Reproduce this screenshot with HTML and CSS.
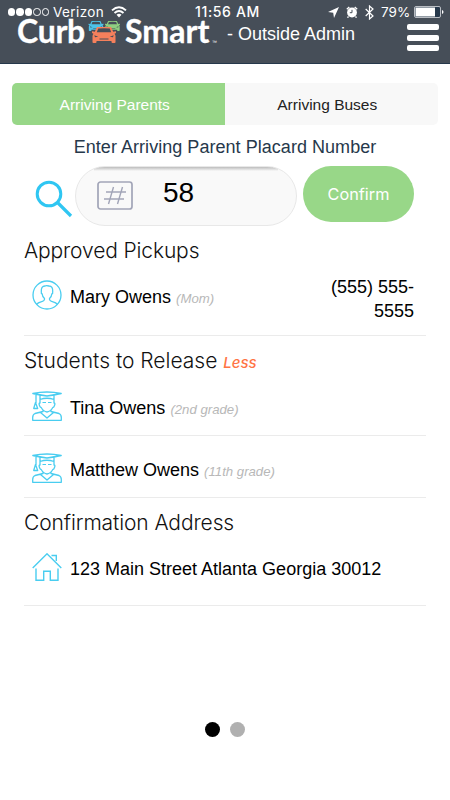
FILE: index.html
```html
<!DOCTYPE html>
<html lang="en">
<head>
<meta charset="utf-8">
<title>Curb Smart</title>
<link rel="stylesheet" href="styles.css">
</head>
<body>
<svg class="defs" width="0" height="0">
  <symbol id="grad" viewBox="0 0 30 30">
    <g fill="none" stroke="#49cdf0" stroke-width="1.3" stroke-linejoin="round">
      <path d="M.8 2.500Q15-.5 29.200 2.500Q22 4 15 5Q8 4 .8 2.500ZM8 4v4.500Q15 6 22 8.500V4M4 3.500v8.500M3.500 11.500l-1.800 6h4ZM8 8.500v3.500Q6.500 12 7.500 14.500Q8 16.500 9.200 16.500Q11.500 20.500 15 21Q18.500 20.500 20.800 16.500Q22 16.500 22.500 14.500Q23.500 12 22 12V8.500M11 19v1.500L3 22.500Q.7 23.500.7 26.500v2.800h28.600V26.500Q29.300 23.500 27 22.500L19 20.500V19M8.500 21.500L15 27L21.500 21.500"/>
      <path d="M10.500 11.500h3.500M16 11.500h3.500" stroke-width="1.200"/>
    </g>
  </symbol>
  <symbol id="car" viewBox="0 0 24 16">
    <path fill="currentColor" d="M5 0Q12-.8 19 0L21.200 4.800L24 4.300V6L22.500 6.800Q23.500 8 23.500 9V15.300Q23.500 16 22.500 16H20.500Q19.500 16 19.500 15V14H4.500V15Q4.500 16 3.500 16H1.500Q.5 16 .5 15.300V9Q.5 8 1.500 6.800L0 6V4.300L2.800 4.800Z"/>
    <path fill="#464e58" d="M6.200 1.600Q12 1 17.800 1.600L19.200 5.200H4.800ZM2.300 8.300l4 1.500-3.300.5ZM21.700 8.300l-4 1.500 3.300.5ZM7.500 11.500h9v1h-9Z"/>
  </symbol>
</svg>
<header class="header">
  <div class="status">
    <span class="signal"><i></i><i></i><i></i><i class="off"></i><i class="off"></i></span>
    <span class="carrier">Verizon</span>
    <svg class="wifi" width="16" height="12" viewBox="0 0 16 12"><g fill="none" stroke="#fff" stroke-width="1.900"><path d="M1 4.400Q8-2 15 4.400M3.500 7Q8 3 12.500 7"/></g><path fill="#fff" d="M5.500 8.800Q8 6.800 10.500 8.800L8 11.500Z"/></svg>
    <span class="time">11:56 AM</span>
    <svg class="loc" width="11" height="11" viewBox="0 0 11 11"><path fill="#fff" d="M11 0L6 11L5.200 5.800L0 5Z"/></svg>
    <svg class="alarm" width="12" height="12" viewBox="0 0 12 12"><circle cx="6" cy="6.500" r="4.900" fill="#fff"/><path d="M.8 3.300L3.300 1M11.200 3.300L8.700 1M2.500 10.500L1.500 11.700M9.500 10.500l1 1.200" stroke="#fff" stroke-width="1.300"/><path d="M6 3.800v2.900H3.800" fill="none" stroke="#464e58"/></svg>
    <svg class="bt" width="9" height="15" viewBox="0 0 9 15"><path d="M.7 4L8 11L4.500 14V1L8 4L.7 11" fill="none" stroke="#fff" stroke-width="1.200"/></svg>
    <span class="pct">79%</span>
    <svg class="batt" width="30" height="12" viewBox="0 0 30 12"><rect x=".5" y=".5" width="26" height="11" rx="1.500" fill="#26384b" stroke="#b9bdc3"/><path fill="#fff" d="M1.500 1.500H21v9H1.500ZM28 4Q29.500 4.500 29.500 6T28 8Z"/></svg>
  </div>
  <div class="brand">
    <span class="word curb">Curb</span>
    <span class="cars"><svg class="car blue"><use href="#car"/></svg><svg class="car green"><use href="#car"/></svg><svg class="car orange"><use href="#car"/></svg></span>
    <span class="word smart">Smart</span><span class="tm">™</span>
    <span class="role">- Outside Admin</span>
    <span class="menu"><i></i><i></i><i></i></span>
  </div>
</header>
<main>
  <nav class="tabs"><span class="tab active"><b>Arriving Parents</b></span><span class="tab"><b>Arriving Buses</b></span></nav>
  <p class="prompt"><span>Enter Arriving Parent Placard Number</span></p>
  <div class="search">
    <svg class="glass" width="38" height="38" viewBox="0 0 38 38"><g fill="none" stroke="#2fc6f2" stroke-width="3"><circle cx="14" cy="14" r="11.800"/><path d="M22.500 22.500L36 36" stroke-width="3.200"/></g></svg>
    <div class="field">
      <svg width="36" height="29" viewBox="0 0 36 29"><g fill="none" stroke="#a2a5b8"><rect x="1" y="1" width="34" height="27" rx="2.500" stroke-width="1.700"/><path d="M16.500 6L11.500 23M25.500 6L20.500 23M9 11h20M7 18h20" stroke-width="1.400"/></g></svg>
      <span class="num">58</span>
    </div>
    <div class="confirm"><span>Confirm</span></div>
  </div>
  <section>
    <h2 class="h-pick">Approved Pickups</h2>
    <div class="row pickup">
      <svg class="icon" viewBox="0 0 30 30"><g fill="none" stroke="#49cdf0" stroke-width="1.300"><circle cx="15" cy="15" r="14"/><path d="M4.500 24.500Q6 22.500 9 21.800Q13 20.800 12.500 18.500Q10.300 16.500 10.200 14Q9 13.500 9.300 11.500Q9 6 13 6Q14 5.200 17 6Q21 6 20.700 11.500Q21 13.500 19.800 14Q19.700 16.500 17.500 18.500Q17 20.800 21 21.800Q24 22.500 25.500 24.500"/></g></svg>
      <span class="name">Mary Owens</span><em class="note">(Mom)</em>
      <span class="phone">(555) 555-<br>5555</span>
    </div>
  </section>
  <section>
    <h2 class="h-stud"><span>Students to Release</span><em class="less">Less</em></h2>
    <div class="row tina"><svg class="icon"><use href="#grad"/></svg><span class="name">Tina Owens</span><em class="note">(2nd grade)</em></div>
    <div class="row matt"><svg class="icon"><use href="#grad"/></svg><span class="name">Matthew Owens</span><em class="note">(11th grade)</em></div>
  </section>
  <section>
    <h2 class="h-addr">Confirmation Address</h2>
    <div class="row addr"><svg class="icon" viewBox="0 0 30 30"><path d="M.7 15L15 .8L29.300 15M4 15.500V27.300h7.700v-9h6.600v9H26V15.500M19.500 2.500h4.800v5.500" fill="none" stroke="#49cdf0" stroke-width="1.400"/></svg><span class="name">123 Main Street Atlanta Georgia 30012</span></div>
  </section>
</main>
<footer class="dots"><i></i><i></i></footer>
</body>
</html>
```
FILE: styles.css
```css
* { box-sizing: border-box; }
body { margin: 0; width: 450px; height: 800px; overflow: hidden; background: #fff; color: #000; font-family: "Liberation Sans", Arial, sans-serif; display: flex; flex-direction: column; }
.defs { position: absolute; }
svg { display: block; flex: none; }
i { display: block; }
span, em { white-space: nowrap; }
.header { height: 64px; flex: none; background: #464e58; border-bottom: 1px solid #26384b; color: #fff; }
.status { height: 24px; display: flex; align-items: center; padding-left: 8px; font: 13.5px/14px Inter, sans-serif; }
.signal { display: flex; gap: 1px; width: 41px; }
.signal i { width: 7.400px; height: 7.400px; border-radius: 50%; background: #fff; }
.signal .off { background: none; border: 1px solid #fff; }
.carrier { width: 57px; margin-left: 4px; letter-spacing: .4px; }
.wifi { margin-left: 1px; }
.time { width: 78px; margin-left: 68px; font-weight: 500; font-size: 14px; letter-spacing: .65px; }
.loc { margin-left: 55px; }
.alarm { margin-left: 7px; }
.bt { margin-left: 7px; }
.pct { width: 30px; margin-left: 7px; }
.batt { margin-left: 3px; }
.brand { height: 40px; margin-top: -8px; display: flex; padding-left: 17px; }
.word { font: 700 32px/24px Lato, sans-serif; padding-top: 3px; -webkit-text-stroke: .3px #fff; }
.curb { width: 71px; letter-spacing: -.3px; }
.smart { width: 87px; margin-left: 5px; letter-spacing: .1px; }
.cars { position: relative; width: 32px; height: 26px; }
.car { position: absolute; }
.blue { left: 0; top: 5px; width: 16px; height: 10px; color: #4dc3ea; }
.green { left: 17px; top: 5px; width: 15px; height: 10px; color: #8fce80; }
.orange { left: 4px; top: 11px; width: 24px; height: 16px; color: #f5805c; }
.tm { font-size: 5px; line-height: 52px; width: 5px; }
.role { width: 130px; margin-left: 10px; font-size: 18px; line-height: 36px; }
.menu { margin: 8px 0 0 50px; width: 32px; display: flex; flex-direction: column; gap: 4.500px; }
.menu i { height: 6px; background: #fff; border-radius: 2px; }
.tabs { display: flex; width: 426px; height: 42px; margin: 19px 12px 0; border-radius: 5px; overflow: hidden; background: #f8f8f8; }
.tab { width: 212.500px; text-align: center; font-size: 15.500px; line-height: 43px; color: #222; padding-right: 7px; }
.active { background: #98d788; color: #fff; }
.tab b { font-weight: 400; }
.prompt { margin: 11px 0 0; text-align: center; font-size: 18px; letter-spacing: .04px; line-height: 22px; color: #26384b; }
.search { height: 67px; display: flex; padding: 8px 0 0 35px; }
.glass { margin-top: 14px; }
.field { width: 222px; height: 60px; margin-left: 2px; border: 1px solid #e8e8e8; border-radius: 30px; background: linear-gradient(#bcbcbc, #f9f9f9) top / 184px 4px no-repeat #f9f9f9; display: flex; padding: 14px 0 0 21px; }
.num { margin-left: 30px; font-size: 28px; line-height: 24px; }
.confirm { margin-left: 6px; width: 111px; height: 56px; border-radius: 28px; background: #98d788; color: #fff; text-align: center; font: 16.300px/57px Inter, sans-serif; }
section { margin: 0 24px; }
h2 { margin: 0; font: 300 21px/43px Inter, sans-serif; color: #111; display: flex; }
.row { display: flex; border-bottom: 1.500px solid #ebebeb; padding-left: 8px; }
.icon { width: 30px; height: 30px; }
.name { margin-left: 8px; font-size: 18px; }
.note { margin-left: 5px; font-size: 13.200px; line-height: 38px; color: #b8b8b8; }
.less { margin-left: 6px; font: italic 500 15px/46px Inter, sans-serif; color: #ff7444; }
.h-pick { height: 46px; line-height: 43px; margin-top: 4px; letter-spacing: -.13px; }
.pickup { height: 61px; padding-top: 5px; }
.pickup .name, .tina .name, .matt .name { line-height: 34px; }
.phone { margin-left: auto; margin-top: -6px; padding-right: 12px; text-align: right; font-size: 18px; line-height: 26px; line-height: 24px; padding-top: 1px; }
.h-stud { height: 54px; line-height: 50px; }
.h-stud .less { line-height: 54px; }
.tina { height: 46px; padding-top: 1px; }
.matt { height: 62px; padding-top: 17px; }
.h-addr { height: 55px; line-height: 50px; letter-spacing: -.1px; }
.addr { height: 53px; }
.addr .name { line-height: 32px; }
.dots { margin-top: 116px; display: flex; justify-content: center; gap: 10px; }
.dots i { width: 15px; height: 15px; border-radius: 50%; background: #000; }
.dots i + i { background: #b0b0b0; }
```
